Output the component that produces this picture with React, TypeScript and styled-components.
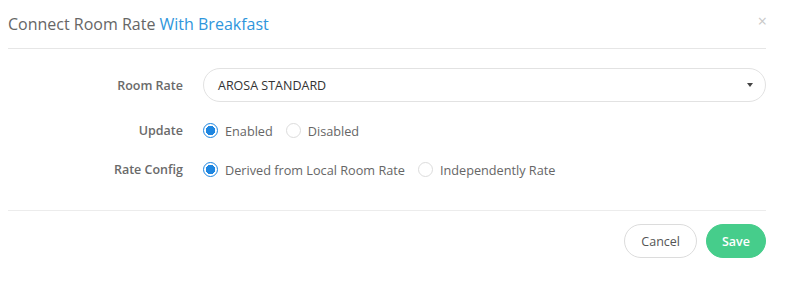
import styled, { createGlobalStyle } from "styled-components";

const GlobalStyle = createGlobalStyle`
  body {
    margin: 0;
    background: #fff;
    font-family: "Open Sans", "Liberation Sans", sans-serif;
  }
`;

const Modal = styled.div`
  width: 758px;
  margin-left: 8px;
  color: #555;
`;

const Header = styled.div`
  display: flex;
  align-items: center;
  justify-content: space-between;
  height: 48px;
  border-bottom: 1px solid #e6e6e6;
`;

const Title = styled.h4`
  margin: 0;
  font-size: 16px;
  font-weight: 400;
  color: #666;
`;

const Accent = styled.span`
  color: #2f96dc;
`;

const Close = styled.span`
  font-size: 16px;
  color: #c8c8c8;
  margin: -6px -1px 0 0;
  line-height: 1;
`;

const Form = styled.div`
  display: grid;
  grid-template-columns: 175px 1fr;
  column-gap: 20px;
  row-gap: 18px;
  align-items: center;
  padding: 19px 0 30px;
  border-bottom: 1px solid #ececec;
`;

const Label = styled.label`
  text-align: right;
  font-size: 12.5px;
  font-weight: 600;
  color: #6a6a6a;
`;

const Select = styled.div`
  display: flex;
  align-items: center;
  justify-content: space-between;
  height: 32px;
  padding: 0 12px 0 14px;
  border: 1px solid #e2e2e2;
  border-radius: 17px;
  font-size: 12.5px;
  color: #333;
`;

const Caret = styled.span`
  width: 0;
  height: 0;
  border-left: 3.5px solid transparent;
  border-right: 3.5px solid transparent;
  border-top: 4px solid #444;
`;

const Options = styled.div`
  display: flex;
  align-items: center;
  gap: 13px;
  height: 21px;
`;

const Option = styled.span`
  display: inline-flex;
  align-items: center;
  gap: 7px;
  font-size: 12.7px;
  color: #666;
`;

const Radio = styled.span<{ $checked?: boolean }>`
  box-sizing: border-box;
  width: 15px;
  height: 15px;
  border-radius: 50%;
  border: 1px solid ${(p) => (p.$checked ? "#1f86e0" : "#dcdcdc")};
  background: ${(p) =>
    p.$checked ? "radial-gradient(circle, #1f86e0 0 4.5px, #fff 5px)" : "#fff"};
`;

const Footer = styled.div`
  display: flex;
  justify-content: flex-end;
  gap: 9px;
  padding-top: 13px;
`;

const Button = styled.button<{ $primary?: boolean }>`
  height: 34px;
  padding: 0 ${(p) => (p.$primary ? "15px" : "16px")};
  border-radius: 17px;
  font-family: inherit;
  font-size: 12.5px;
  font-weight: ${(p) => (p.$primary ? 600 : 400)};
  border: 1px solid ${(p) => (p.$primary ? "#46cd8b" : "#dcdcdc")};
  background: ${(p) => (p.$primary ? "#46cd8b" : "#fff")};
  color: ${(p) => (p.$primary ? "#fff" : "#555")};
`;

export default function App() {
  return (
    <>
      <GlobalStyle />
      <Modal>
        <Header>
          <Title>
            Connect Room Rate <Accent>With Breakfast</Accent>
          </Title>
          <Close>×</Close>
        </Header>
        <Form>
          <Label>Room Rate</Label>
          <Select>
            AROSA STANDARD
            <Caret />
          </Select>
          <Label>Update</Label>
          <Options>
            <Option>
              <Radio $checked /> Enabled
            </Option>
            <Option>
              <Radio /> Disabled
            </Option>
          </Options>
          <Label>Rate Config</Label>
          <Options>
            <Option>
              <Radio $checked /> Derived from Local Room Rate
            </Option>
            <Option>
              <Radio /> Independently Rate
            </Option>
          </Options>
        </Form>
        <Footer>
          <Button>Cancel</Button>
          <Button $primary>Save</Button>
        </Footer>
      </Modal>
    </>
  );
}
